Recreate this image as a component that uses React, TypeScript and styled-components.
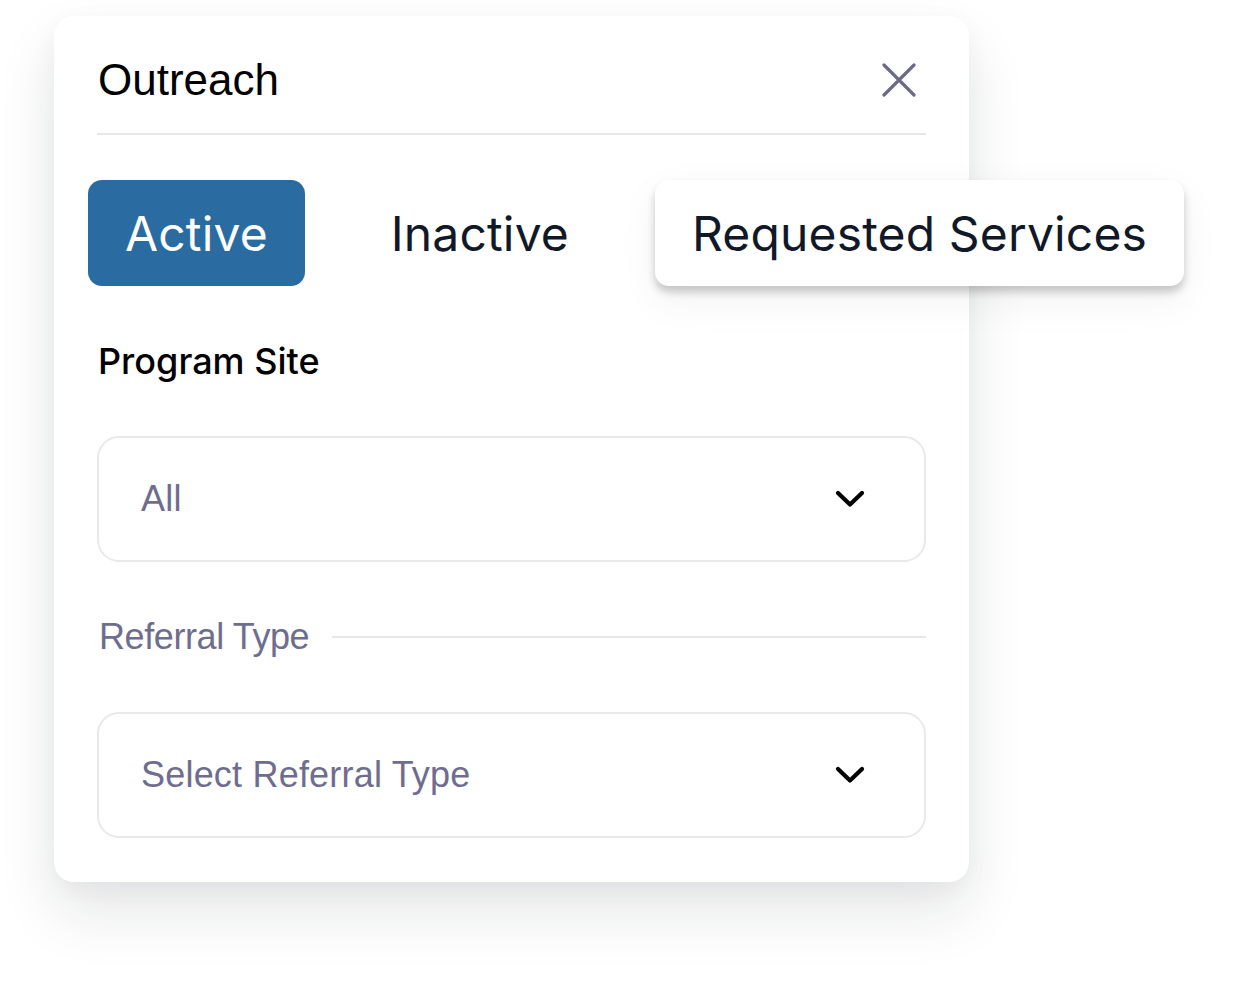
import React, { useState } from "react";
import styled, { createGlobalStyle } from "styled-components";

const GlobalStyle = createGlobalStyle`
  html, body {
    margin: 0;
    padding: 0;
    background: #ffffff;
  }
  body {
    font-family: "Liberation Sans", Arial, sans-serif;
  }
`;

const tabs = ["Active", "Inactive", "Requested Services"];

const App = () => {
  const [tab, setTab] = useState(0);
  return (
    <>
      <GlobalStyle />
      <Page>
        <Card>
          <Header>
            <Title>Outreach</Title>
            <CloseButton aria-label="Close">
              <svg width="34" height="34" viewBox="0 0 34 34" fill="none">
                <path
                  d="M2 2L32 32M32 2L2 32"
                  stroke="#6b6b88"
                  strokeWidth="3.2"
                  strokeLinecap="round"
                />
              </svg>
            </CloseButton>
          </Header>

          <TabRow>
            {tabs.map((t, i) => (
              <Tab
                key={t}
                $active={tab === i}
                $raised={i === 2}
                onClick={() => setTab(i)}
              >
                {t}
              </Tab>
            ))}
          </TabRow>

          <FieldLabel>Program Site</FieldLabel>
          <Select>
            <SelectText>All</SelectText>
            <Chevron />
          </Select>

          <SectionRow>
            <SectionLabel>Referral Type</SectionLabel>
            <SectionLine />
          </SectionRow>
          <Select>
            <SelectText>Select Referral Type</SelectText>
            <Chevron />
          </Select>
        </Card>
      </Page>
    </>
  );
};

const Chevron = () => (
  <ChevronWrap>
    <svg width="32" height="20" viewBox="0 0 32 20" fill="none">
      <path
        d="M4 4L16 15.5L28 4"
        stroke="#000"
        strokeWidth="4.2"
        strokeLinecap="round"
        strokeLinejoin="round"
      />
    </svg>
  </ChevronWrap>
);

export default App;

const Page = styled.div`
  padding: 16px 0 0 54px;
  min-height: 989px;
  box-sizing: border-box;
`;

const Card = styled.div`
  width: 915px;
  box-sizing: border-box;
  padding: 44px 43px 44px 43px;
  background: #fff;
  border-radius: 20px;
  box-shadow: 0 30px 60px rgba(20, 24, 40, 0.11), 0 6px 24px rgba(0, 0, 0, 0.04);
`;

const Header = styled.div`
  display: flex;
  justify-content: space-between;
  align-items: center;
  height: 40px;
  padding-bottom: 33px;
  border-bottom: 2px solid #e8e8ea;
`;

const Title = styled.h1`
  margin: 0;
  font-family: "Liberation Sans", Arial, sans-serif;
  font-weight: 400;
  font-size: 44px;
  line-height: 40px;
  color: #000;
  padding-left: 1px;
`;

const CloseButton = styled.button`
  display: flex;
  align-items: center;
  justify-content: center;
  border: none;
  background: none;
  padding: 0;
  margin-right: 10px;
  cursor: pointer;
`;

const TabRow = styled.div`
  display: flex;
  gap: 49px;
  margin: 45px 0 0 -9px;
  width: max-content;
`;

const Tab = styled.button<{ $active: boolean; $raised: boolean }>`
  height: 106px;
  padding: 0 37px;
  border: none;
  border-radius: 14px;
  font-family: Inter, "Noto Sans", sans-serif;
  font-size: 48px;
  font-weight: 400;
  letter-spacing: 0.15px;
  cursor: pointer;
  background: ${({ $active }) => ($active ? "#2a6ca1" : "#fff")};
  color: ${({ $active }) => ($active ? "#fff" : "#111827")};
  box-shadow: ${({ $raised }) =>
    $raised
      ? "0 6px 8px rgba(0, 0, 0, 0.2), 0 14px 40px rgba(0, 0, 0, 0.06)"
      : "none"};
`;

const FieldLabel = styled.div`
  margin-top: 53px;
  font-family: Inter, "Noto Sans", sans-serif;
  font-weight: 500;
  font-size: 36px;
  line-height: 44px;
  color: #000;
  padding-left: 1px;
`;

const Select = styled.div`
  margin-top: 53px;
  height: 126px;
  box-sizing: border-box;
  display: flex;
  align-items: center;
  justify-content: space-between;
  padding: 0 58px 0 42px;
  border: 2px solid #e9e9eb;
  border-radius: 22px;
  cursor: pointer;
`;

const SelectText = styled.span`
  font-family: "Liberation Sans", Arial, sans-serif;
  font-size: 36px;
  letter-spacing: 0.2px;
  color: #6e6d8f;
`;

const ChevronWrap = styled.span`
  display: flex;
  align-items: center;
`;

const SectionRow = styled.div`
  display: flex;
  align-items: center;
  gap: 23px;
  margin-top: 55px;
  height: 40px;
  & + ${Select} {
    margin-top: 55px;
  }
`;

const SectionLabel = styled.span`
  font-family: "Liberation Sans", Arial, sans-serif;
  font-size: 36px;
  letter-spacing: -0.4px;
  color: #6e6d8f;
  padding-left: 2px;
  white-space: nowrap;
`;

const SectionLine = styled.div`
  flex: 1;
  height: 2px;
  background: #e8e8ea;
`;
